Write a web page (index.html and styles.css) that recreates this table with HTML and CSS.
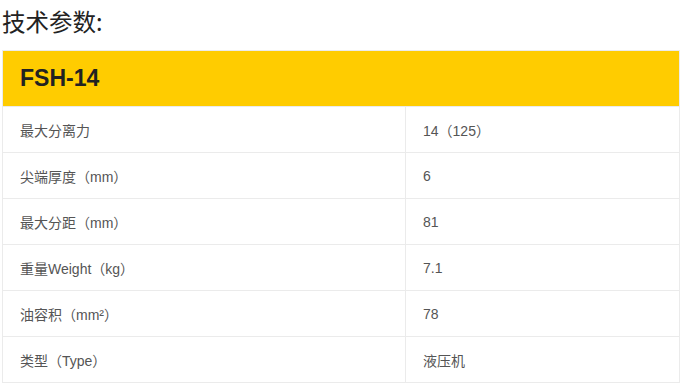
FILE: index.html
```html
<!DOCTYPE html>
<html lang="zh-CN">
<head>
<meta charset="utf-8">
<link rel="stylesheet" href="styles.css">
</head>
<body>
<h2 class="title">技术参数:</h2>
<table class="spec">
  <colgroup><col class="c1"><col class="c2"></colgroup>
  <thead>
    <tr><th colspan="2" class="model">FSH-14</th></tr>
  </thead>
  <tbody>
    <tr><td>最大分离力</td><td>14（125）</td></tr>
    <tr><td>尖端厚度（mm）</td><td>6</td></tr>
    <tr><td>最大分距（mm）</td><td>81</td></tr>
    <tr><td>重量Weight（kg）</td><td>7.1</td></tr>
    <tr><td>油容积（mm²）</td><td>78</td></tr>
    <tr><td>类型（Type）</td><td>液压机</td></tr>
  </tbody>
</table>
</body>
</html>
```
FILE: styles.css
```css
body {
  margin: 0;
  padding: 0 0 0 2px;
  background: #fff;
  font-family: "Liberation Sans", Arial, "Noto Sans CJK SC", sans-serif;
}
.title {
  margin: 0;
  height: 50px;
  padding-top: 5px;
  box-sizing: border-box;
  font-family: "Noto Sans CJK SC", "Liberation Sans", sans-serif;
  font-weight: 400;
  font-size: 23.5px;
  line-height: 32px;
  color: #222;
}
.spec {
  width: 678px;
  border-collapse: collapse;
  border: 1px solid #ebebeb;
  table-layout: fixed;
}
.c1 { width: 403px; }
.model {
  background: #ffcc00;
  height: 55px;
  padding: 0 0 0 17px;
  text-align: left;
  font-family: "Liberation Sans", Arial, sans-serif;
  font-weight: 700;
  font-size: 23px;
  color: #222;
}
.spec td {
  height: 45px;
  border: 1px solid #ebebeb;
  padding: 0 0 0 17px;
  font-size: 14px;
  color: #555;
  font-family: "Liberation Sans", Arial, "Noto Sans CJK SC", sans-serif;
}
```
